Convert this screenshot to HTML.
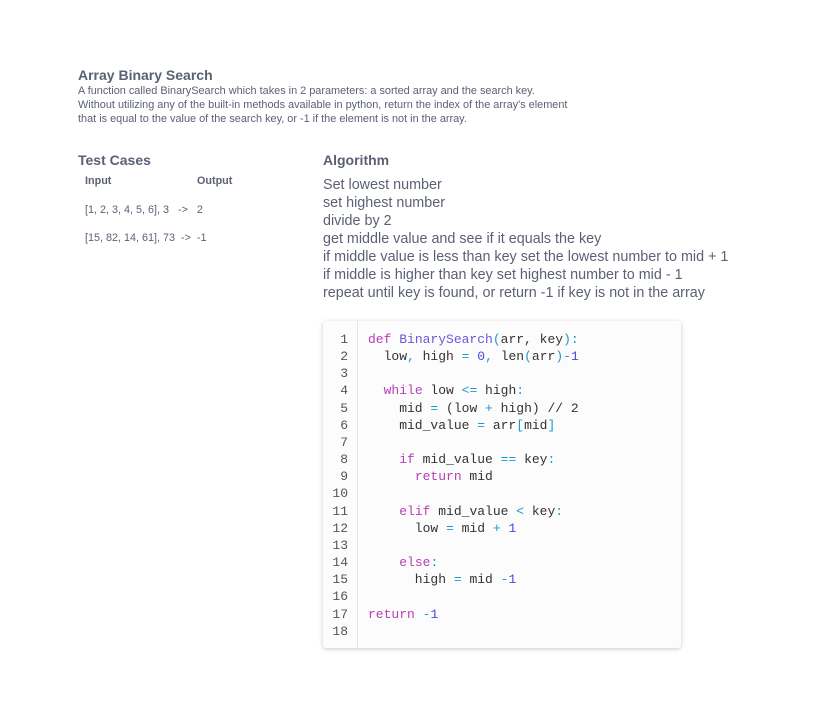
<!DOCTYPE html>
<html><head><style>
body{margin:0;background:#fff;width:829px;height:718px;position:relative;font-family:"Liberation Sans",sans-serif;color:#5b6175;}
.a{position:absolute;white-space:nowrap}
.t{font-weight:bold;font-size:14px;color:#5b6175}
.d{font-size:10.9px;line-height:14px;color:#5b6175}
.s{font-size:10.8px;color:#5b6175}
.alg{font-size:14.35px;line-height:18px;color:#5b6175}
.code{position:absolute;left:323px;top:321px;width:358px;height:327px;background:#fcfcfc;border-radius:3px;box-shadow:0 1px 4px rgba(0,0,0,.22);}
.gut{position:absolute;left:34px;top:0;bottom:0;border-left:1px solid #e4e4e4}
pre{margin:0;font-family:"Liberation Mono",monospace;font-size:13px;line-height:17.15px;color:#333;position:absolute;top:10px}
.n{left:0;width:25px;text-align:right;color:#555}
.c{left:45px}
.k{color:#b640b6}.o{color:#1f98d0}.m{color:#4848e0}.f{color:#6a5ad8}
</style></head><body>
<div class="a t" style="left:78px;top:67px">Array Binary Search</div>
<div class="a d" style="left:78px;top:84px">A function called BinarySearch which takes in 2 parameters: a sorted array and the search key.<br>Without utilizing any of the built-in methods available in python, return the index of the array's element<br>that is equal to the value of the search key, or -1 if the element is not in the array.</div>
<div class="a t" style="left:78px;top:152px">Test Cases</div>
<div class="a s" style="left:85px;top:175px;font-weight:bold">Input</div>
<div class="a s" style="left:197px;top:175px;font-weight:bold">Output</div>
<div class="a s" style="left:85px;top:204px">[1, 2, 3, 4, 5, 6], 3 &nbsp;&nbsp;-&gt; &nbsp;&nbsp;2</div>
<div class="a s" style="left:85px;top:232px">[15, 82, 14, 61], 73 &nbsp;-&gt; &nbsp;-1</div>
<div class="a t" style="left:323px;top:152px">Algorithm</div>
<div class="a alg" style="left:323px;top:176px">Set lowest number<br>set highest number<br>divide by 2<br>get middle value and see if it equals the key<br>if middle value is less than key set the lowest number to mid + 1<br>if middle is higher than key set highest number to mid - 1<br>repeat until key is found, or return -1 if key is not in the array</div>
<div class="code"><div class="gut"></div>
<pre class="n">1
2
3
4
5
6
7
8
9
10
11
12
13
14
15
16
17
18</pre>
<pre class="c"><span class="k">def</span> <span class="f">BinarySearch</span><span class="o">(</span>arr, key<span class="o">):</span>
  low<span class="o">,</span> high <span class="o">=</span> <span class="m">0</span><span class="o">,</span> len<span class="o">(</span>arr<span class="o">)-</span><span class="m">1</span>

  <span class="k">while</span> low <span class="o">&lt;=</span> high<span class="o">:</span>
    mid <span class="o">=</span> (low <span class="o">+</span> high) // 2
    mid_value <span class="o">=</span> arr<span class="o">[</span>mid<span class="o">]</span>

    <span class="k">if</span> mid_value <span class="o">==</span> key<span class="o">:</span>
      <span class="k">return</span> mid

    <span class="k">elif</span> mid_value <span class="o">&lt;</span> key<span class="o">:</span>
      low <span class="o">=</span> mid <span class="o">+</span> <span class="m">1</span>

    <span class="k">else</span><span class="o">:</span>
      high <span class="o">=</span> mid <span class="o">-</span><span class="m">1</span>

<span class="k">return</span> <span class="o">-</span><span class="m">1</span>
</pre></div>
</body></html>
